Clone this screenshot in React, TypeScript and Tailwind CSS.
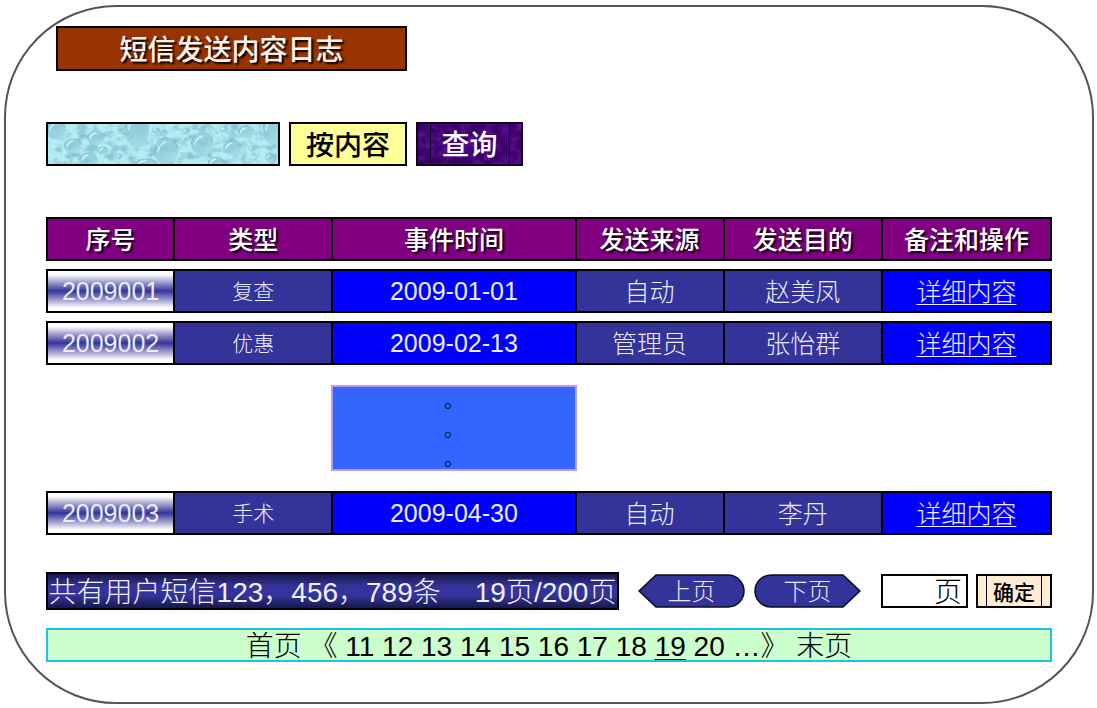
import type { ReactNode } from "react";

type Row = { id: string; kind: string; date: string; source: string; target: string };

const firstRows: Row[] = [
  { id: "2009001", kind: "复查", date: "2009-01-01", source: "自动", target: "赵美凤" },
  { id: "2009002", kind: "优惠", date: "2009-02-13", source: "管理员", target: "张怡群" },
];
const lastRow: Row = { id: "2009003", kind: "手术", date: "2009-04-30", source: "自动", target: "李丹" };

const headings = ["序号", "类型", "事件时间", "发送来源", "发送目的", "备注和操作"];
const pages = [11, 12, 13, 14, 15, 16, 17, 18, 19, 20];

function WaterTexture() {
  const drops = [
    [8, 6, 9, 10], [25, 22, 9, 7], [48, 14, 9, 7], [55, 27, 5, 4], [40, 36, 9, 7],
    [89, 4, 12, 20], [118, 27, 12, 13], [154, 20, 11, 11], [184, 24, 9, 7], [198, 8, 8, 6],
    [225, 5, 10, 16], [98, 40, 11, 5], [168, 39, 8, 6], [108, 7, 4, 3], [138, 8, 4, 3],
    [204, 25, 3, 3], [222, 34, 5, 4], [71, 33, 3, 3], [136, 16, 4, 2], [176, 6, 4, 3],
  ];
  return (
    <svg className="absolute inset-0 h-full w-full" viewBox="0 0 230 40" preserveAspectRatio="none" aria-hidden="true">
      <defs>
        <filter id="mist" x="0" y="0" width="1" height="1" colorInterpolationFilters="sRGB">
          <feTurbulence type="fractalNoise" baseFrequency="0.1 0.14" numOctaves="3" seed="4" />
          <feColorMatrix values="0 0 0 0 0.45  0 0 0 0 0.72  0 0 0 0 0.8  3 0 0 0 -1.25" />
        </filter>
        <linearGradient id="drop" x1="0" y1="0" x2="0.4" y2="1">
          <stop offset="0" stopColor="#a9dde6" />
          <stop offset="0.5" stopColor="#86c5d4" />
          <stop offset="1" stopColor="#9ad9e4" />
        </linearGradient>
      </defs>
      <rect width="230" height="40" fill="#b6ecf1" />
      <rect width="230" height="40" filter="url(#mist)" opacity="0.7" />
      {drops.map(([x, y, rx, ry]) => (
        <g key={`${x}-${y}`}>
          <ellipse cx={x} cy={y} rx={rx} ry={ry} fill="url(#drop)" opacity="0.75" />
          <path
            d={`M${x - rx} ${y} Q${x - rx * 0.8} ${y - ry} ${x} ${y - ry} Q${x + rx * 0.8} ${y - ry} ${x + rx} ${y - ry * 0.2}`}
            fill="none"
            stroke="#5c98ad"
            strokeWidth="0.7"
            opacity="0.6"
          />
          <path
            d={`M${x - rx * 0.7} ${y + ry * 0.1} Q${x - rx * 0.5} ${y - ry * 0.6} ${x} ${y - ry * 0.7}`}
            fill="none"
            stroke="#dcfaff"
            strokeWidth="1.2"
          />
        </g>
      ))}
    </svg>
  );
}

function VelvetTexture() {
  return (
    <svg className="absolute inset-0 h-full w-full" viewBox="0 0 103 40" preserveAspectRatio="none" aria-hidden="true">
      <filter id="velvet" x="0" y="0" width="1" height="1" colorInterpolationFilters="sRGB">
        <feTurbulence type="fractalNoise" baseFrequency="0.12" numOctaves="3" seed="9" />
        <feColorMatrix values="0 0 0 0 0.4  0 0 0 0 0.08  0 0 0 0 0.6  2 0 0 0 -0.75" />
      </filter>
      <rect width="103" height="40" fill="#380068" />
      <rect width="103" height="40" filter="url(#velvet)" />
      <path d="M12.5 0V40M91.5 0V40" stroke="#12001f" />
    </svg>
  );
}

function ArrowButton({ back, children }: { back?: boolean; children: ReactNode }) {
  return (
    <button type="button" className="relative h-[34px] w-[107px] pt-0.5 text-2xl leading-none font-light text-[#e6e6f5]">
      <svg className="absolute inset-0 h-full w-full" viewBox="0 0 107 34" aria-hidden="true">
        <path
          d={back ? "M1 17L18 1H90A16 16 0 0 1 90 33H18Z" : "M106 17L89 1H17A16 16 0 0 0 17 33H89Z"}
          fill="#333399"
          stroke="#0b0b22"
          strokeWidth="1.5"
        />
      </svg>
      <span className="relative">{children}</span>
    </button>
  );
}

function LogRow({ row }: { row: Row }) {
  const cell = "border-y-2 border-r-2 border-black p-0";
  return (
    <tr className="h-11 text-center text-[25px] leading-none font-light text-[#ececfa]">
      <td className={`${cell} border-l-2 bg-[linear-gradient(to_bottom,#ffffff_8%,#333399_50%,#ffffff_92%)]`}>{row.id}</td>
      <td className={`${cell} bg-[#333399] text-[21px]`}>{row.kind}</td>
      <td className={`${cell} bg-[#0000ff]`}>{row.date}</td>
      <td className={`${cell} bg-[#333399] pt-0.5`}>{row.source}</td>
      <td className={`${cell} bg-[#333399] pt-0.5`}>{row.target}</td>
      <td className={`${cell} bg-[#0000ff] pt-0.5`}>
        <a href="#detail" className="underline decoration-1 underline-offset-3">详细内容</a>
      </td>
    </tr>
  );
}

export default function App() {
  return (
    <div className="bg-white pt-[5px] pr-[3px] pb-1 pl-1 font-['Liberation_Sans','Noto_Sans_CJK_SC',sans-serif] text-black">
      <main className="rounded-[112px] border-2 border-[#555555] px-10 pt-[19px] pb-10">
        <h1 className="ml-[10px] flex h-[45px] w-[351px] items-center justify-center border-2 border-black bg-[#993300] pt-1 text-[28px] leading-none font-medium text-[#fff5ee] [text-shadow:2px_2px_2px_#000]">
          短信发送内容日志
        </h1>

        <form className="mt-[51px] flex gap-[9px]" onSubmit={(e) => e.preventDefault()}>
          <div className="relative h-11 w-[234px] border-2 border-black">
            <WaterTexture />
            <input type="text" aria-label="查询内容" className="relative h-full w-full bg-transparent px-2 text-2xl outline-none" />
          </div>
          <select aria-label="查询方式" className="h-11 w-[118px] appearance-none border-2 border-black bg-[#ffff99] px-[15px] pt-1 text-[28px] leading-none font-medium">
            <option>按内容</option>
          </select>
          <button type="submit" className="relative h-11 w-[107px] border-2 border-[#12001f] pt-1 text-[28px] leading-none font-medium text-white">
            <VelvetTexture />
            <span className="relative">查询</span>
          </button>
        </form>

        <table className="mt-[43px] w-full table-fixed border-separate border-spacing-x-0 border-spacing-y-2">
          <colgroup>
            <col className="w-[129px]" />
            <col className="w-[158px]" />
            <col className="w-[243px]" />
            <col className="w-[148px]" />
            <col className="w-[158px]" />
            <col className="w-[169px]" />
          </colgroup>
          <thead>
            <tr className="h-11 text-[25px] leading-none text-white [text-shadow:2px_2px_2px_#000]">
              {headings.map((h) => (
                <th key={h} scope="col" className="border-y-2 border-r-2 border-black bg-[#800080] p-0 pt-0.5 font-medium first:border-l-2">
                  {h}
                </th>
              ))}
            </tr>
          </thead>
          <tbody>
            {firstRows.map((row) => (
              <LogRow key={row.id} row={row} />
            ))}
            <tr className="h-[110px]">
              <td colSpan={2} />
              <td className="p-0">
                <div className="-ml-0.5 h-[86px] border-2 border-[#b899f5] bg-[#3366ff] text-center text-xl leading-[29px] font-light">
                  <div>。</div>
                  <div>。</div>
                  <div>。</div>
                </div>
              </td>
              <td colSpan={3} />
            </tr>
            <LogRow row={lastRow} />
          </tbody>
        </table>

        <div className="mt-[29px] flex items-center">
          <p className="flex h-[38px] w-[573px] items-center justify-center gap-[34px] border-2 border-black bg-[linear-gradient(to_bottom,#17174a,#333399_35%,#333399_65%,#17174a)] pt-1 text-[28px] leading-none font-light whitespace-nowrap text-[#f0f0ff]">
            <span>共有用户短信123，456，789条</span>
            <span>19页/200页</span>
          </p>
          <div className="ml-[19px] flex gap-[9px]">
            <ArrowButton back>上页</ArrowButton>
            <ArrowButton>下页</ArrowButton>
          </div>
          <form className="ml-auto flex gap-2" onSubmit={(e) => e.preventDefault()}>
            <label className="flex h-[34px] w-[87px] items-center border-2 border-black pt-1 pr-1 text-[28px] leading-none font-light">
              <input type="text" aria-label="页" className="min-w-0 flex-1 bg-transparent pl-1 outline-none" />
              页
            </label>
            <button type="submit" className="flex h-[34px] w-[76px] border-2 border-black bg-[#fdebd3] px-2 text-[21px] leading-none font-medium">
              <span className="flex h-full flex-1 items-center justify-center border-x border-black pt-0.5">确定</span>
            </button>
          </form>
        </div>

        <nav aria-label="分页" className="mt-[18px] h-[34px] border-2 border-[#22c1e6] bg-[#ccffcc] text-center text-[28px] leading-[34px] font-light whitespace-nowrap">
          <a href="#first">首页</a> 《{" "}
          {pages.map((p) => (
            <span key={p}>
              <a href={`#page-${p}`} aria-current={p === 19 ? "page" : undefined} className={p === 19 ? "underline decoration-1 underline-offset-3" : ""}>
                {p}
              </a>{" "}
            </span>
          ))}
          …》 <a href="#last">末页</a>
        </nav>
      </main>
    </div>
  );
}
